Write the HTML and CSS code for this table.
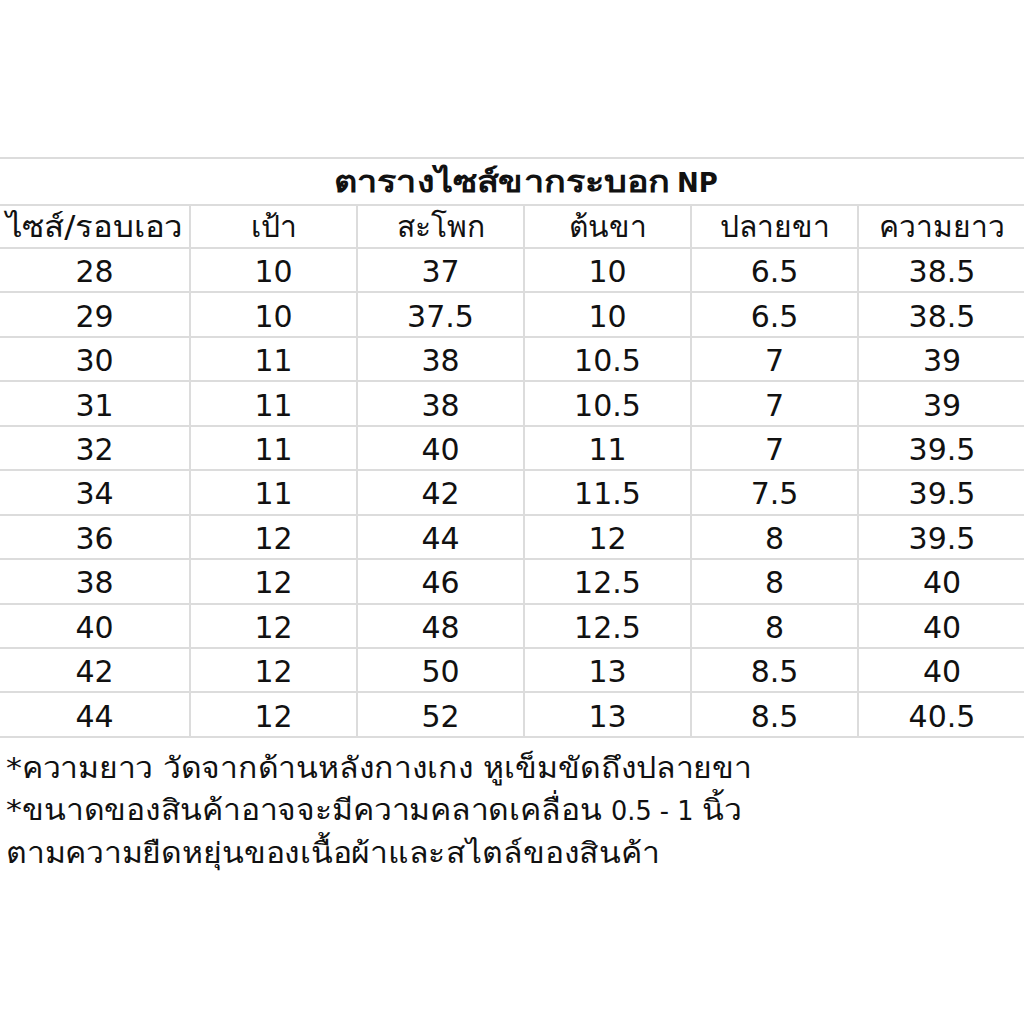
FILE: index.html
```html
<!DOCTYPE html>
<html lang="th">
<head>
<meta charset="utf-8">
<link rel="stylesheet" href="styles.css">
</head>
<body>
<div class="page">
  <table class="size-table">
    <colgroup>
      <col class="c1"><col class="cn"><col class="cn"><col class="cn"><col class="cn"><col class="cl">
    </colgroup>
    <tr class="title-row"><td colspan="6"><span class="title"><span class="title-th">ตารางไซส์ขากระบอก</span> NP</span></td></tr>
    <tr class="head-row">
      <td><span class="wide">ไซส์/รอบเอว</span></td><td>เป้า</td><td>สะโพก</td><td>ต้นขา</td><td>ปลายขา</td><td>ความยาว</td>
    </tr>
    <tr><td>28</td><td>10</td><td>37</td><td>10</td><td>6.5</td><td>38.5</td></tr>
    <tr><td>29</td><td>10</td><td>37.5</td><td>10</td><td>6.5</td><td>38.5</td></tr>
    <tr><td>30</td><td>11</td><td>38</td><td>10.5</td><td>7</td><td>39</td></tr>
    <tr><td>31</td><td>11</td><td>38</td><td>10.5</td><td>7</td><td>39</td></tr>
    <tr><td>32</td><td>11</td><td>40</td><td>11</td><td>7</td><td>39.5</td></tr>
    <tr><td>34</td><td>11</td><td>42</td><td>11.5</td><td>7.5</td><td>39.5</td></tr>
    <tr><td>36</td><td>12</td><td>44</td><td>12</td><td>8</td><td>39.5</td></tr>
    <tr><td>38</td><td>12</td><td>46</td><td>12.5</td><td>8</td><td>40</td></tr>
    <tr><td>40</td><td>12</td><td>48</td><td>12.5</td><td>8</td><td>40</td></tr>
    <tr><td>42</td><td>12</td><td>50</td><td>13</td><td>8.5</td><td>40</td></tr>
    <tr><td>44</td><td>12</td><td>52</td><td>13</td><td>8.5</td><td>40.5</td></tr>
  </table>
  <div class="notes">
    <p><span class="note-line">*ความยาว วัดจากด้านหลังกางเกง หูเข็มขัดถึงปลายขา</span></p>
    <p><span class="note-line">*ขนาดของสินค้าอาจจะมีความคลาดเคลื่อน <span class="num">0.5 - 1</span> นิ้ว</span></p>
    <p><span class="note-line">ตามความยืดหยุ่นของเนื้อผ้าและสไตล์ของสินค้า</span></p>
  </div>
</div>
</body>
</html>
```

FILE: styles.css
```css
html, body {
  margin: 0;
  padding: 0;
  background: #ffffff;
}
body {
  font-family: "DejaVu Sans", "Noto Sans", sans-serif;
  color: #111111;
}
.page {
  width: 1024px;
  height: 1024px;
  padding-top: 157px;
  box-sizing: border-box;
  overflow: hidden;
}
.size-table {
  border-collapse: collapse;
  table-layout: fixed;
  width: 1026px;
}
.c1 { width: 190px; }
.cn { width: 167px; }
.cl { width: 168px; }
.size-table td {
  border: 2px solid #dcdcdc;
  text-align: center;
  vertical-align: middle;
  padding: 4px 0 0 0;
  box-sizing: border-box;
  font-size: 30px;
  height: 44.45px;
  line-height: 1;
}
.size-table tr td:first-child { border-left: none; }
.title-row td {
  height: 47px;
  text-align: left;
  padding: 0 0 0 334px;
}
.title {
  font-weight: bold;
  font-size: 26px;
  white-space: nowrap;
}
.title-th {
  display: inline-block;
  font-size: 30px;
  transform: scaleX(1.2);
  transform-origin: left center;
  margin-right: 54px;
}
.head-row td {
  height: 43px;
  padding-top: 0;
}
.wide {
  display: inline-block;
  transform: scaleX(1.1);
}
.notes {
  padding: 9px 0 0 6px;
}
.notes p {
  margin: 0;
  font-size: 29px;
  line-height: 42px;
  white-space: nowrap;
}
.note-line {
  display: inline-block;
  transform: scaleX(1.1);
  transform-origin: left center;
}
.num {
  font-size: 27px;
  display: inline-block;
  transform: scaleX(0.86);
  margin: 0 -7px;
}
```
